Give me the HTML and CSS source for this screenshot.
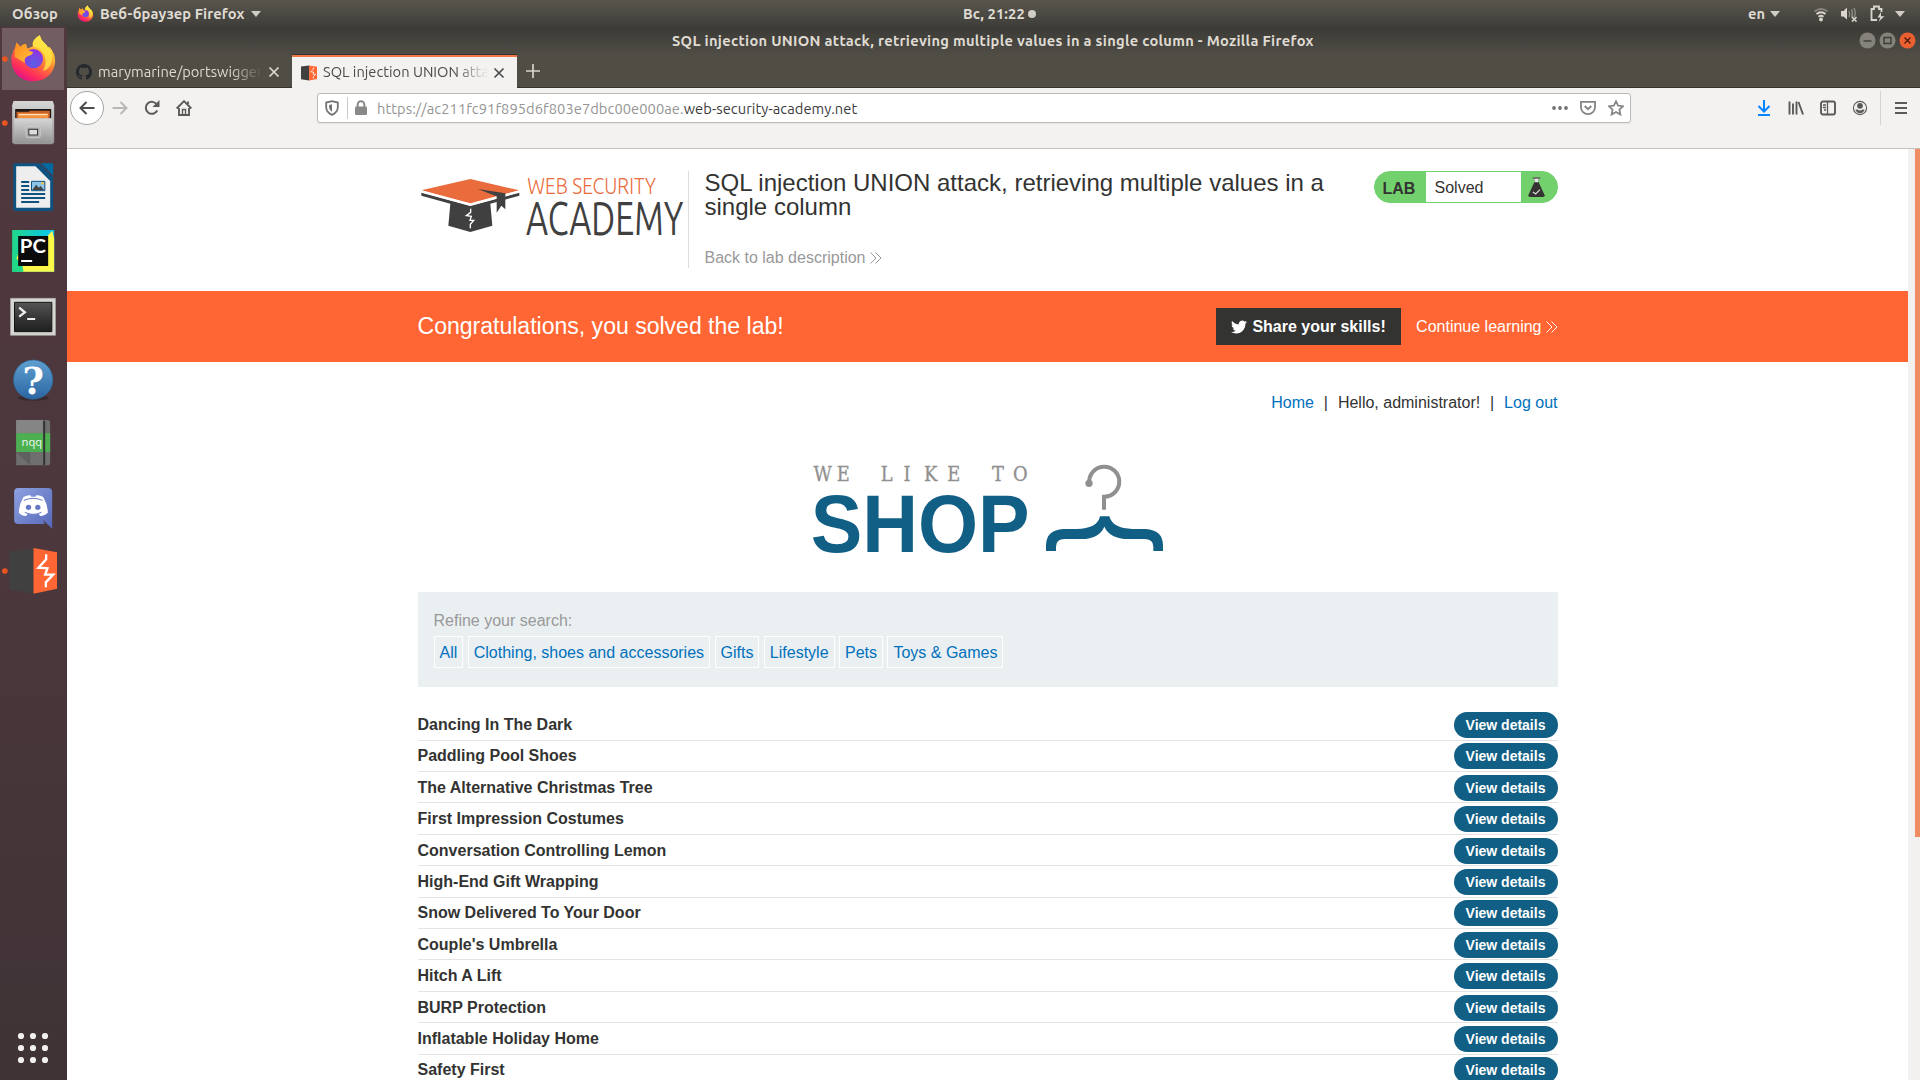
FILE: index.html
```html
<!DOCTYPE html>
<html lang="ru">
<head>
<meta charset="utf-8">
<title>SQL injection UNION attack, retrieving multiple values in a single column</title>
<link rel="stylesheet" href="styles.css">
</head>
<body>
<svg class="defs" width="0" height="0" aria-hidden="true">
  <defs>
    <linearGradient id="ffBody" x1="0.85" y1="0.05" x2="0.3" y2="1"><stop offset="0" stop-color="#fff44f"/><stop offset=".3" stop-color="#ffbd2e"/><stop offset=".55" stop-color="#ff7139"/><stop offset=".8" stop-color="#ff2f5a"/><stop offset="1" stop-color="#e3108a"/></linearGradient>
    <linearGradient id="ffFox" x1="0" y1="0" x2="1" y2="1"><stop offset="0" stop-color="#ff8a1f"/><stop offset="1" stop-color="#ffc23c"/></linearGradient>
    <radialGradient id="ffGlobe" cx=".5" cy=".75" r=".8"><stop offset="0" stop-color="#5a5fe6"/><stop offset="1" stop-color="#9a2ce0"/></radialGradient>
    <linearGradient id="steel" x1="0" y1="0" x2="0" y2="1"><stop offset="0" stop-color="#d6d6d6"/><stop offset="1" stop-color="#929292"/></linearGradient>
    <linearGradient id="pc" x1="0" y1="0" x2="1" y2="0"><stop offset="0" stop-color="#21d789"/><stop offset="1" stop-color="#07c3f2"/></linearGradient>
    <linearGradient id="term" x1="0" y1="0" x2="0" y2="1"><stop offset="0" stop-color="#555"/><stop offset=".5" stop-color="#383838"/><stop offset="1" stop-color="#1f1f1f"/></linearGradient>
    <linearGradient id="help" x1="0" y1="0" x2="0" y2="1"><stop offset="0" stop-color="#5f9fd0"/><stop offset="1" stop-color="#2b66a3"/></linearGradient>
    <linearGradient id="disc" x1="0" y1="0" x2="1" y2="1"><stop offset="0" stop-color="#8ea1e1"/><stop offset="1" stop-color="#5468b8"/></linearGradient>
  </defs>
  <symbol id="firefox" viewBox="30 40 140 146">
    <path fill="url(#ffBody)" d="M33 122C32 100 41 88 45 80L48 66L60 79Q67 72 77 70L81 84L98 78C94 62 106 52 119 44Q122 58 134 68Q141 72 143 82L148 79Q166 98 166 124C164 158 138 184 100 184C62 184 35 158 33 122Z"/>
    <path fill="#ffe84a" opacity=".75" d="M99 78C96 60 108 52 119 44Q122 58 134 68Q160 90 156 122Q150 148 128 152Q142 130 134 106Q126 84 99 78Z"/>
    <circle cx="100" cy="115" r="29" fill="url(#ffGlobe)"/>
    <path fill="url(#ffFox)" d="M43 90L48 66L60 79Q66 72 77 70L80 86Q86 92 98 95Q99 104 82 108Q70 114 74 128Q58 118 43 110Z"/>
  </symbol>
  <symbol id="burp" viewBox="27 684 144 137">
    <path fill="#404040" d="M27 695L100 684V821L27 808Z"/>
    <path fill="#ff6633" d="M100 684L171 697V806L100 821Z"/>
    <path fill="none" stroke="#fff" stroke-width="7" d="M138 703V718L115 743L142 745L135 764H159L137 787V802"/>
  </symbol>
  <symbol id="cross" viewBox="0 0 12 12"><path d="M1.500 1.500l9 9M10.500 1.500l-9 9" fill="none" stroke="currentColor" stroke-width="1.700"/></symbol>
  <symbol id="chevrons" viewBox="0 0 12 12"><path d="M.5.5L6 6L.5 11.500M5.500.5L11 6L5.500 11.500" fill="none" stroke="currentColor" stroke-width="1"/></symbol>
  <symbol id="caret" viewBox="0 0 10 6"><path d="M0 0h10L5 6z" fill="currentColor"/></symbol>
</svg>

<div class="topbar">
  <span class="activities">Обзор</span>
  <svg class="app-icon" width="17" height="17"><use href="#firefox"/></svg>
  <span class="app-name">Веб-браузер Firefox</span>
  <svg class="caret" width="10" height="6"><use href="#caret"/></svg>
  <span class="clock"><span class="clock-text">Вс, 21:22</span><i class="dot"></i></span>
  <span class="tray">
    <span class="lang">en</span>
    <svg class="caret" width="10" height="6"><use href="#caret"/></svg>
    <svg class="wifi" width="16" height="16" viewBox="0 0 16 16"><g fill="none" stroke="#d9d6cf" stroke-width="1.800"><path d="M1.500 5.500Q8 .5 14.500 5.500" opacity=".4"/><path d="M3.500 8Q8 4.500 12.500 8M5.500 10.700Q8 8.700 10.500 10.700"/></g><circle cx="8" cy="13.500" r="1.900" fill="#d9d6cf"/></svg>
    <svg width="18" height="16" viewBox="0 0 18 16"><path fill="#d9d6cf" d="M1 5h2.500L7 1.500v12L3.500 10.500H1z"/><path d="M9 5q1.500 3 0 6M11.500 3.500q2 4 0 8M14 2q2.500 6 0 9" fill="none" stroke="#d9d6cf" opacity=".45" stroke-width="1.400"/><path d="M12 11l4.500 4.500M16.500 11L12 15.500" stroke="#d9d6cf" stroke-width="1.600"/></svg>
    <svg width="16" height="17" viewBox="0 0 16 17"><path d="M8 15H2.500V4H5V1.500h5V4h2.500v3" fill="none" stroke="#d9d6cf" stroke-width="1.800"/><path fill="#d9d6cf" d="M12 7L8.500 12.500h3L9.500 16.800L15.500 11.200H12z"/></svg>
    <svg class="caret last" width="10" height="6"><use href="#caret"/></svg>
  </span>
</div>

<div class="desktop">
  <nav class="dock">
    <div class="slot active"><svg viewBox="0 21 200 192"><circle cx="14" cy="117" r="8.500" fill="#e95420"/><use href="#firefox" x="30" y="42" width="140" height="144"/></svg></div>
    <div class="slot"><svg viewBox="0 213 200 192"><circle cx="14" cy="309" r="8.500" fill="#e95420"/><path fill="url(#steel)" d="M40 243H158L162 256V370H36V256Z"/><path fill="#1d1815" d="M45 267H153V296H45Z"/><path fill="#c8622b" d="M49 275H85L90 272H149V296H49Z"/><path fill="#f7923c" d="M54 280H144V296H54Z"/><path stroke="#fff0dc" stroke-width="3" d="M56 284H142"/><path fill="url(#steel)" stroke="#bdbdbd" stroke-width="1" d="M42 295H156V372H42Z"/><rect x="78" y="321" width="42" height="32" rx="5" fill="#aaa" stroke="#dcdcdc" stroke-width="2"/><rect x="86" y="328" width="26" height="17" fill="#ddd" stroke="#383838" stroke-width="3"/></svg></div>
    <div class="slot"><svg viewBox="0 405 200 192"><path fill="#0f5280" d="M44 430H118L159 472V568Q159 573 153 573H45Q39 573 39 566V436Q39 430 44 430Z"/><path fill="#0369a3" d="M122 430H155Q159 430 159 434V467Z"/><path fill="#eee" d="M48 439H106L150 483V563H48Z"/><path stroke="#0f5280" stroke-width="6" d="M63 486H87M63 498H87M63 510H87M63 522H135M63 534H135M63 546H117"/><path fill="#8cc4ea" stroke="#0f5280" stroke-width="3" d="M94 484H134V512H94Z"/><path fill="#444" d="M96 510L108 494L116 503L121 498L132 510Z"/><circle cx="127" cy="490" r="4" fill="#f4c044"/></svg></div>
    <div class="slot"><svg viewBox="0 597 200 192"><path fill="url(#pc)" d="M36 630H162V755H36Z"/><path fill="#fcf84a" d="M162 655V755H66L36 742L60 690L140 650L156 632Z"/><path fill="#21d789" d="M36 700L66 735L70 755H36Z"/><path fill="#0b0b0b" d="M54 648H144V738H54Z"/><path fill="#fff" d="M63 720H96V726H63Z"/><text x="59" y="698" class="pc-label" textLength="78" lengthAdjust="spacingAndGlyphs">PC</text></svg></div>
    <div class="slot"><svg viewBox="0 9 200 192"><path fill="#d5d5d2" stroke="#a9a9a6" stroke-width="2" d="M31 55H166V166H31Z"/><path fill="url(#term)" stroke="#151515" stroke-width="3" d="M43 67H155V155H43Z"/><path fill="none" stroke="#eee" stroke-width="7" d="M57 83L74 97L57 110"/><path fill="#eee" d="M81 114H105V120H81Z"/></svg></div>
    <div class="slot"><svg viewBox="0 81 200 192"><ellipse cx="99" cy="234" rx="46" ry="8" fill="#000" opacity=".25"/><circle cx="99" cy="179" r="59" fill="url(#help)" stroke="#2f6699" stroke-width="2"/><text x="99" y="221" text-anchor="middle" class="help-label">?</text></svg></div>
    <div class="slot"><svg viewBox="0 273 200 192"><path fill="#6f6f6f" d="M48 300H142Q150 300 150 308V428Q150 436 142 436H48Z"/><path fill="#858585" d="M48 300H128V340H48Z"/><path fill="#555" d="M48 396H90V436Z" opacity=".6"/><path fill="#4caf50" d="M48 340H150V396H48Z"/><path fill="#333" d="M129 302H135V435H129Z"/><text x="64" y="377" class="nqq-label" textLength="62" lengthAdjust="spacingAndGlyphs">nqq</text></svg></div>
    <div class="slot"><svg viewBox="0 465 200 192"><path fill="url(#disc)" d="M54 504H144Q156 504 156 516V626L128 600L134 612H54Q42 612 42 600V516Q42 504 54 504Z"/><path fill="#fff" d="M70 531Q80 525 91 526L93 530H106L108 526Q120 525 129 531Q143 555 143 578Q135 587 120 588L115 581Q99 585 83 581L78 588Q62 586 56 578Q56 555 70 531Z"/><circle cx="85" cy="562" r="8" fill="#6578c6"/><circle cx="113" cy="562" r="8" fill="#6578c6"/><path fill="none" stroke="#6578c6" stroke-width="3" d="M71 541Q99 529 127 541M74 577Q99 589 124 577"/></svg></div>
    <div class="slot"><svg viewBox="0 657 200 192"><circle cx="14" cy="753" r="8.500" fill="#e95420"/><use href="#burp" x="27" y="684" width="144" height="137"/></svg></div>
    <div class="apps"><svg width="32" height="32" viewBox="0 0 32 32" fill="#f2f1ef"><circle cx="4" cy="4" r="3.100"/><circle cx="16" cy="4" r="3.100"/><circle cx="28" cy="4" r="3.100"/><circle cx="4" cy="16" r="3.100"/><circle cx="16" cy="16" r="3.100"/><circle cx="28" cy="16" r="3.100"/><circle cx="4" cy="28" r="3.100"/><circle cx="16" cy="28" r="3.100"/><circle cx="28" cy="28" r="3.100"/></svg></div>
  </nav>

  <div class="window">
    <div class="titlebar">
      <span class="title">SQL injection UNION attack, retrieving multiple values in a single column - Mozilla Firefox</span>
      <span class="controls">
        <svg width="17" height="17" viewBox="0 0 17 17"><circle cx="8.500" cy="8.500" r="8" fill="#85827b"/><path d="M4.500 9h8" stroke="#3c3b37" stroke-width="1.400"/></svg>
        <svg width="17" height="17" viewBox="0 0 17 17"><circle cx="8.500" cy="8.500" r="8" fill="#85827b"/><path d="M5 5.500h7v6H5z" fill="none" stroke="#3c3b37" stroke-width="1.400"/></svg>
        <svg width="17" height="17" viewBox="0 0 17 17"><circle cx="8.500" cy="8.500" r="8" fill="#ec5f31"/><path d="M5.500 5.500l6 6M11.500 5.500l-6 6" stroke="#4a1c0c" stroke-width="1.400"/></svg>
      </span>
    </div>
    <div class="tabs">
      <div class="tab">
        <svg width="16" height="16" viewBox="0 0 16 16"><path fill="#24292e" fill-rule="evenodd" d="M8 0C3.580 0 0 3.580 0 8c0 3.540 2.290 6.530 5.470 7.590.4.070.55-.17.55-.38 0-.19-.01-.82-.01-1.490-2.010.37-2.530-.49-2.690-.94-.09-.23-.48-.94-.82-1.130-.28-.15-.68-.52-.01-.53.63-.01 1.080.58 1.230.82.72 1.210 1.870.87 2.330.66.07-.52.28-.87.51-1.070-1.780-.2-3.640-.89-3.640-3.950 0-.87.31-1.590.82-2.150-.08-.2-.36-1.020.08-2.120 0 0 .67-.21 2.200.82.64-.18 1.320-.27 2-.27s1.360.09 2 .27c1.530-1.040 2.200-.82 2.200-.82.44 1.100.16 1.920.08 2.120.51.56.82 1.270.82 2.150 0 3.070-1.870 3.750-3.650 3.950.29.25.54.73.54 1.480 0 1.070-.01 1.930-.01 2.200 0 .21.15.46.55.38A8.010 8.010 0 0 0 16 8c0-4.420-3.580-8-8-8z"/></svg>
        <span class="tab-text">marymarine/portswigger</span>
        <svg width="12" height="12"><use href="#cross"/></svg>
      </div>
      <div class="tab current">
        <svg width="16" height="16"><use href="#burp"/></svg>
        <span class="tab-text">SQL injection UNION attack</span>
        <svg width="12" height="12"><use href="#cross"/></svg>
      </div>
      <svg class="plus" width="14" height="14" viewBox="0 0 14 14"><path d="M7 0v14M0 7h14" stroke="#d6d3cc" stroke-width="1.700"/></svg>
    </div>
    <div class="toolbar">
      <span class="back"><svg width="16" height="16" viewBox="0 0 16 16"><path d="M15.500 8H1.500M7.500 2L1.500 8l6 6" fill="none" stroke="#4c4c4b" stroke-width="2"/></svg></span>
      <svg class="forward" width="16" height="16" viewBox="0 0 16 16"><path d="M.5 8h14M8.500 2l6 6l-6 6" fill="none" stroke="#b9b8b6" stroke-width="2"/></svg>
      <svg class="reload" width="16" height="16" viewBox="0 0 16 16"><path d="M13.200 10.500A6 6 0 1 1 12.800 4.500" fill="none" stroke="#5a5a59" stroke-width="2"/><path fill="#5a5a59" d="M15.500 0v7H8.500z"/></svg>
      <svg class="home" width="16" height="16" viewBox="0 0 16 16"><path d="M.7 8.500L8 1.200l7.300 7.300M3 8v7h10V8M12 1.500V4" fill="none" stroke="#5a5a59" stroke-width="1.900"/><path fill="none" stroke="#5a5a59" stroke-width="1.400" d="M6.500 15V9.500h3V15"/></svg>
      <div class="urlbar">
        <svg class="shield" width="14" height="16" viewBox="0 0 14 16"><path d="M7 1.200L12.800 2.500V7.500Q12.500 12.500 7 14.800Q1.500 12.500 1.200 7.500V2.500Z" fill="none" stroke="#737372" stroke-width="1.800"/><path d="M7 4.300V11.700Q4.300 10.200 4.100 7.300V4.900Z" fill="#737372"/></svg>
        <i class="bar-sep"></i>
        <svg class="lock" width="14" height="16" viewBox="0 0 14 16"><path d="M3.700 7V4.500a3.300 3.300 0 0 1 6.600 0V7" fill="none" stroke="#8a8988" stroke-width="2"/><rect x="1" y="6.500" width="12" height="8.500" rx="1.200" fill="#8a8988"/></svg>
        <span class="url"><span class="dim">https://ac211fc91f895d6f803e7dbc00e000ae.</span><span class="host">web-security-academy.net</span></span>
        <svg width="16" height="16" viewBox="0 0 16 16" fill="#737372"><circle cx="2" cy="8" r="1.900"/><circle cx="8" cy="8" r="1.900"/><circle cx="14" cy="8" r="1.900"/></svg>
        <svg width="16" height="16" viewBox="0 0 16 16" fill="none" stroke="#858483"><path stroke-width="1.800" d="M1 1.900H15V7.500A7 6.600 0 0 1 1 7.500Z"/><path stroke-width="2" d="M4.700 6L8 9.200L11.300 6"/></svg>
        <svg width="16" height="16" viewBox="0 0 16 16"><path fill="none" stroke="#858483" stroke-width="1.700" d="M8 1.200L10.100 5.600L15 6.200L11.400 9.500L12.400 14.600L8 12.100L3.600 14.600L4.600 9.500L1 6.200L5.900 5.600Z"/></svg>
      </div>
      <svg width="16" height="16" viewBox="0 0 16 16"><path d="M8 0v11M2.500 6L8 11.500L13.500 6M2 15h12" fill="none" stroke="#0a84ff" stroke-width="2"/></svg>
      <svg width="16" height="16" viewBox="0 0 16 16"><path d="M1.500 1.500v13M5 3.500v11M8.500 1.500v13M10.500 2L15 14.500" fill="none" stroke="#5a5a59" stroke-width="1.900"/></svg>
      <svg width="16" height="16" viewBox="0 0 16 16"><rect x="1" y="1.500" width="14" height="13" rx="2" fill="none" stroke="#5a5a59" stroke-width="1.900"/><path d="M7.500 2v12M3 5h3M3 7.500h3M4 10h2" stroke="#5a5a59" stroke-width="1.300"/></svg>
      <svg width="16" height="16" viewBox="0 0 16 16"><circle cx="8" cy="8" r="6.600" fill="none" stroke="#5a5a59" stroke-width="1.100"/><circle cx="8" cy="5.800" r="2.900" fill="#5a5a59"/><path fill="#5a5a59" d="M3.300 9.500H5.500Q8 11.500 10.500 9.500H12.700Q11.500 13.200 8 13.200T3.300 9.500Z"/></svg>
      <i class="tool-sep"></i>
      <svg class="menu" width="14" height="14" viewBox="0 0 14 14"><path d="M1 2h12M1 7h12M1 12h12" stroke="#5a5a59" stroke-width="2"/></svg>
    </div>

    <div class="viewport">
      <div class="page">
        <header class="lab-header wrap">
          <svg class="logo" width="270" height="62" viewBox="50 75 810 186">
            <path fill="#ea6b3c" d="M63 121L210 87L357 121L210 160Z"/>
            <path fill="#404040" d="M63 128L210 168L357 128V137L270 161L276 227L210 246L144 227L150 161L63 137Z"/>
            <path fill="none" stroke="#fff" stroke-width="6" d="M63 124L210 164L357 124"/>
            <path fill="#404040" d="M232 117L315 130V178L303 167L289 188V139Z"/>
            <path fill="none" stroke="#fff" stroke-width="4" d="M211 176V187L198 197L213 199L209 211H220L210 223V235"/>
            <text x="381" y="132" class="logo-top" textLength="386" lengthAdjust="spacingAndGlyphs">WEB SECURITY</text>
            <text x="377" y="254" class="logo-bottom" textLength="472" lengthAdjust="spacingAndGlyphs">ACADEMY</text>
          </svg>
          <div class="lab-title">
            <h2>SQL injection UNION attack, retrieving multiple values in a single column</h2>
            <a class="back-link">Back to lab description <svg width="12" height="12"><use href="#chevrons"/></svg></a>
          </div>
          <div class="lab-status">
            <b>LAB</b><span class="state">Solved</span>
            <svg width="17" height="20" viewBox="0 0 51 60"><path fill="#eee" stroke="#999" stroke-width="2" d="M20 3H31V18H20Z"/><path fill="#666" d="M14 1H37V5H14Z"/><path fill="#333332" d="M19 16H32L50 55Q50 60 45 60H6Q1 60 1 55Z"/><path d="M15 45L23 51L36 38" fill="none" stroke="#ddd" stroke-width="3.500"/></svg>
          </div>
        </header>
        <section class="banner">
          <div class="wrap banner-row">
            <span class="congrats">Congratulations, you solved the lab!</span>
            <a class="share"><svg width="16" height="14" viewBox="0 0 24 20"><path fill="#fff" d="M23.950 2.570a10 10 0 0 1-2.820.77 4.960 4.960 0 0 0 2.160-2.720 9.900 9.900 0 0 1-3.120 1.190 4.920 4.920 0 0 0-8.380 4.480C7.690 6.090 4.070 4.130 1.640 1.160a4.820 4.820 0 0 0-.67 2.480c0 1.710.87 3.210 2.190 4.090a4.900 4.900 0 0 1-2.230-.61v.06a4.920 4.920 0 0 0 3.950 4.830 5 5 0 0 1-2.210.09 4.940 4.940 0 0 0 4.600 3.420A9.870 9.870 0 0 1 0 17.540a14 14 0 0 0 7.560 2.210c9.050 0 14-7.500 14-13.980 0-.21 0-.42-.02-.63a9.940 9.940 0 0 0 2.460-2.550z"/></svg>Share your skills!</a>
            <a class="continue">Continue learning <svg width="12" height="12"><use href="#chevrons"/></svg></a>
          </div>
        </section>
        <main class="wrap">
          <div class="account"><a>Home</a><span>|</span><span>Hello, administrator!</span><span>|</span><a>Log out</a></div>
          <div class="brand">
            <svg width="420" height="130" viewBox="0 0 1260 390">
              <text class="brand-top" transform="scale(.85 1)" y="122" x="118 200 280 356 436 508 590 670 748 822">WE LIKE TO</text>
              <text class="brand-main" x="92" y="335" textLength="657" lengthAdjust="spacingAndGlyphs">SHOP</text>
              <path fill="none" stroke="#909090" stroke-width="12" d="M928 130A45 45 0 1 1 972 170V209"/>
              <circle cx="927" cy="130" r="11" fill="#909090"/>
              <path fill="#115f85" d="M798 333V315Q799 270 850 267H890C930 266 955 255 960 229H988C995 255 1018 265 1058 267H1097Q1148 270 1149 315V333H1120V320Q1120 297 1093 297H1045Q990 297 973 260Q957 297 905 297H854Q828 297 828 320V333Z"/>
            </svg>
          </div>
          <section class="filters">
            <label>Refine your search:</label>
            <div class="chips"><a>All</a><a>Clothing, shoes and accessories</a><a>Gifts</a><a>Lifestyle</a><a>Pets</a><a>Toys &amp; Games</a></div>
          </section>
          <div class="list">
            <div class="row"><b>Dancing In The Dark</b><a>View details</a></div>
            <div class="row"><b>Paddling Pool Shoes</b><a>View details</a></div>
            <div class="row"><b>The Alternative Christmas Tree</b><a>View details</a></div>
            <div class="row"><b>First Impression Costumes</b><a>View details</a></div>
            <div class="row"><b>Conversation Controlling Lemon</b><a>View details</a></div>
            <div class="row"><b>High-End Gift Wrapping</b><a>View details</a></div>
            <div class="row"><b>Snow Delivered To Your Door</b><a>View details</a></div>
            <div class="row"><b>Couple's Umbrella</b><a>View details</a></div>
            <div class="row"><b>Hitch A Lift</b><a>View details</a></div>
            <div class="row"><b>BURP Protection</b><a>View details</a></div>
            <div class="row"><b>Inflatable Holiday Home</b><a>View details</a></div>
            <div class="row"><b>Safety First</b><a>View details</a></div>
          </div>
        </main>
      </div>
      <div class="scrollbar"><div class="thumb"></div></div>
    </div>
  </div>
</div>
</body>
</html>
```
FILE: styles.css
```css
* { box-sizing: border-box; }
html, body { margin: 0; height: 1080px; overflow: hidden; }
body { display: flex; flex-direction: column; width: 1920px; font-family: Ubuntu, "Noto Sans", sans-serif; font-size: 14.667px; }
svg { display: block; flex: none; }
.defs { position: absolute; }

.topbar { flex: none; height: 27px; display: flex; align-items: center; color: #dfdbd2; font-weight: 600; background: linear-gradient(#5a564e, #3e3d39); white-space: nowrap; }
.activities { width: 66px; padding-left: 12px; letter-spacing: .2px; }
.app-icon { margin-left: 11px; }
.app-name { width: 147px; margin-left: 6px; letter-spacing: .1px; }
.caret { color: #d0cdc6; margin-left: 4px; }
.clock { display: flex; align-items: center; margin-left: 702px; }
.clock-text { width: 62px; letter-spacing: .1px; }
.dot { width: 8px; height: 8px; margin-left: 3px; border-radius: 50%; background: #d0cdc6; }
.tray { margin-left: auto; display: flex; align-items: center; padding-right: 15px; gap: 11px; }
.tray .caret { margin-left: 0; }
.tray .lang + .caret { margin-left: -6px; }
.tray .last { margin-left: -1px; }
.wifi { margin-left: 22px; }

.desktop { flex: 1; display: flex; min-height: 0; }
.dock { width: 67px; flex: none; display: flex; flex-direction: column; background: linear-gradient(#50383e, #4b373c 50%, #3f3336); }
.slot { height: 64px; flex: none; }
.slot svg { width: 67px; height: 64px; }
.slot.active { background: linear-gradient(#725d62, #725d62) 2px 1px / 62px 62px no-repeat; }
.apps { margin-top: auto; height: 64px; padding: 16px 0 0 17px; }
.pc-label { font: 700 55px Lato, sans-serif; fill: #fff; }
.help-label { font: 700 110px "DejaVu Serif", serif; fill: #fff; }
.nqq-label { font: 34px "Noto Sans", sans-serif; fill: #e8f5e9; }

.window { flex: 1; min-width: 0; display: flex; flex-direction: column; }
.titlebar { height: 28px; flex: none; display: grid; grid-template-columns: 1fr auto 1fr; align-items: center; background: linear-gradient(#3b3a36, #504d46); color: #dfdbd2; font-weight: 700; white-space: nowrap; }
.title { grid-column: 2; width: 643px; letter-spacing: .3px; padding-bottom: 2px; }
.controls { display: flex; gap: 3px; justify-content: flex-end; padding: 0 4px 1px 0; }
.tabs { height: 33px; flex: none; display: flex; background: #504d45; box-shadow: inset 0 -1px #33322e; }
.tab { width: 225px; display: flex; align-items: center; padding: 1px 12px 0 9px; color: #dedad1; }
.tab.current { background: #f4f2f1; color: #4c4c4c; border-top: 2px solid #f07746; padding: 0 12px 0 9px; box-shadow: 0 -1px #33322e; }
.tab-text { flex: 1; min-width: 0; margin: 0 5px 2px 6px; overflow: hidden; white-space: nowrap; -webkit-mask-image: linear-gradient(90deg, #000 80%, transparent); mask-image: linear-gradient(90deg, #000 80%, transparent); }
.plus { margin: 9px 0 0 9px; }

.toolbar { height: 61px; flex: none; display: flex; align-items: flex-start; padding: 12px 11px 0 3px; background: #f4f2f1; border-bottom: 1px solid #c4c2c0; gap: 16px; }
.back { flex: none; width: 34px; height: 34px; margin-top: -9px; border: 1px solid #a5a4a2; border-radius: 50%; background: #fff; display: flex; align-items: center; justify-content: center; }
.forward { margin-left: -8px; }
.urlbar { flex: none; width: 1314px; height: 30px; margin: -7px 109px 0 109px; border: 1px solid #bdbbb9; border-radius: 3px; background: #fff; display: flex; align-items: center; padding-right: 6px; gap: 12px; box-shadow: 0 1px 2px rgba(0,0,0,.06); }
.shield { margin-left: 7px; }
.bar-sep { width: 1px; height: 22px; background: #c8c8c8; margin: 0 -5px 0 -4px; }
.lock { margin-left: -1px; }
.url { flex: 1; margin-left: -3px; white-space: nowrap; display: flex; letter-spacing: .07px; }
.dim { color: #959594; }
.host { color: #3b3b3b; }
.tool-sep { flex: none; width: 1px; height: 34px; margin: -9px -5px 0 -4px; background: #d5d3d1; }
.menu { margin: 1px 0 0 2px; }

.viewport { flex: 1; min-height: 0; display: flex; background: #fff; overflow: hidden; }
.page { flex: 1; min-width: 0; font: 16px/20px "Liberation Sans", Arial, sans-serif; color: #333332; }
.scrollbar { width: 12px; background: #f2f1f0; padding-left: 7px; }
.thumb { height: 688px; background: #f08c64; }
.wrap { width: 1140px; margin: 0 auto; }

.lab-header { height: 142px; padding-top: 22px; display: flex; align-items: flex-start; }
.logo { margin: 4px 0 0 -1px; }
.logo-top { font: 300 70px Ubuntu, Lato, sans-serif; fill: #ea6b3c; }
.logo-bottom { font: 400 139px Ubuntu, Lato, sans-serif; fill: #404040; }
.lab-title { width: 686px; height: 97px; margin-left: 1px; padding-left: 16px; border-left: 1px solid #ddd; }
h2 { margin: 0; font-size: 24px; line-height: 24px; font-weight: 400; width: 640px; }
.back-link { display: flex; align-items: center; gap: 5px; margin-top: 29px; color: #999; }
.lab-status { margin-left: auto; width: 184px; height: 32px; border: 1px solid #72d16d; border-radius: 16px; background: #72d16d; display: flex; align-items: center; overflow: hidden; }
.lab-status b { width: 51px; padding: 3px 0 0 8px; }
.state { width: 95px; height: 30px; line-height: 32px; padding-left: 9px; background: #fff; }
.lab-status svg { margin-left: 7px; }

.banner { height: 71px; background: #ff6633; color: #fff; }
.banner-row { height: 71px; display: flex; align-items: center; }
.congrats { font-size: 23.040px; margin: 0 auto 2px 0; }
.share { width: 185px; height: 37px; background: #333332; font-weight: 700; display: flex; align-items: center; justify-content: center; gap: 5px; }
.continue { display: flex; align-items: center; gap: 4px; margin-left: 15px; }

.account { display: flex; justify-content: flex-end; gap: 9.900px; padding-top: 31px; }
.account a, .chips a { color: #0071bc; }
.brand { display: flex; margin: 27px 0 0 362px; height: 152px; }
.brand-top { font: 63px "DejaVu Serif", serif; fill: #909090; stroke: #909090; stroke-width: 1px; }
.brand-main { font: 700 243px "Liberation Sans", Arial, sans-serif; fill: #115f85; }
.filters { height: 95px; background: #eaeff2; padding: 19px 16px 0; }
.filters label { display: block; color: #999; }
.chips { display: flex; gap: 4.450px; margin-top: 5px; }
.chips a { height: 32px; line-height: 32px; padding: 0 5px; border: 1px solid #fff; }
.list { padding-top: 22.300px; }
.row { height: 31.400px; padding-top: 1.200px; display: flex; align-items: center; justify-content: space-between; border-bottom: 1px solid #e4e4e4; }
.row a { width: 104px; height: 26px; line-height: 26px; border-radius: 13px; background: #115f85; color: #fff; font-size: 14px; font-weight: 700; text-align: center; }
```
